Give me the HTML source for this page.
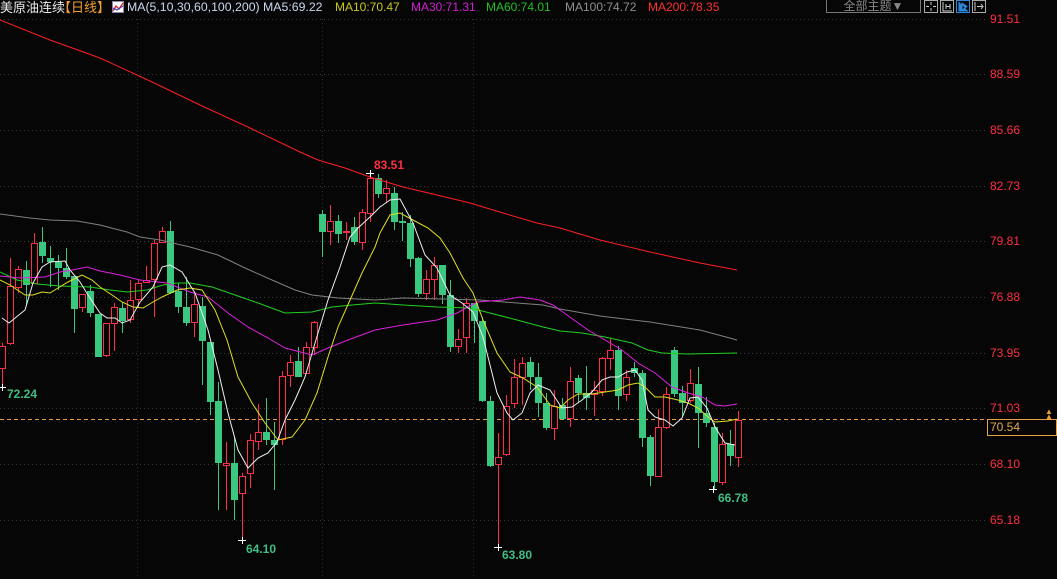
<!DOCTYPE html>
<html><head><meta charset="utf-8">
<style>
html,body{margin:0;padding:0;background:#060606;}
#w{position:relative;width:1057px;height:579px;overflow:hidden;background:#060606;font-family:"Liberation Sans","Noto Sans CJK SC",sans-serif;}
.t{position:absolute;top:0;font-size:12px;line-height:15px;white-space:nowrap;}
.ax{position:absolute;left:990px;font-size:12px;color:#ff3040;line-height:14px;}
.lb{position:absolute;font-size:12px;font-weight:bold;color:#3fbf84;line-height:14px;}
</style></head><body>
<div id="w">
<svg id="s" width="1057" height="579" style="position:absolute;left:0;top:0"></svg>
<div class="t" style="left:0;color:#e8e8e8;font-size:13px">美原油连续</div>
<div class="t" style="left:58px;color:#f0a030;font-size:13px">【日线】</div>
<svg style="position:absolute;left:112px;top:1px" width="12" height="12"><rect x="0.5" y="0.5" width="11" height="11" fill="#fff" stroke="#88a"/><polyline points="1,10 4,5 7,8 11,2" fill="none" stroke="#e02020" stroke-width="1.3"/><polyline points="1,7 5,9 11,5" fill="none" stroke="#2040d0" stroke-width="1"/></svg>
<div class="t" style="left:127px;color:#c8d8f0;font-size:12.3px">MA(5,10,30,60,100,200) MA5:69.22</div>
<div class="t" style="left:335px;color:#c8c820">MA10:70.47</div>
<div class="t" style="left:411px;color:#d020d0">MA30:71.31</div>
<div class="t" style="left:486px;color:#20c020">MA60:74.01</div>
<div class="t" style="left:565px;color:#909090">MA100:74.72</div>
<div class="t" style="left:648px;color:#ff3030">MA200:78.35</div>
<div style="position:absolute;left:826px;top:0;width:93px;height:12px;border:1px solid #777;border-top:none;color:#888;font-size:12px;line-height:12px;text-align:center">全部主题▼</div>
<svg style="position:absolute;left:924px;top:0" width="62" height="14">
<rect x="0.5" y="0.5" width="13" height="12" fill="none" stroke="#aaa"/><path d="M7 2v3M7 8v3M2 6.5h3M9 6.5h3" stroke="#ccc"/>
<rect x="16.5" y="0.5" width="13" height="12" fill="none" stroke="#aaa"/><path d="M19 2v9h9M22 4v5M26 4v5M22 6.5h4" stroke="#ccc" fill="none"/>
<rect x="32.5" y="0.5" width="13" height="12" fill="none" stroke="#2a8ae0"/><path d="M35 2v9h9M38 3l5 3.5-5 3.5z" stroke="#2a8ae0" fill="#2a8ae0"/>
<rect x="48.5" y="0.5" width="13" height="12" fill="none" stroke="#aaa"/><path d="M51 2v9M53 6.5h6M57 4l2 2.5-2 2.5" stroke="#ccc" fill="none"/>
</svg>
<div class="ax" style="top:12px">91.51</div>
<div class="ax" style="top:67px">88.59</div>
<div class="ax" style="top:123px">85.66</div>
<div class="ax" style="top:179px">82.73</div>
<div class="ax" style="top:234px">79.81</div>
<div class="ax" style="top:290px">76.88</div>
<div class="ax" style="top:346px">73.95</div>
<div class="ax" style="top:401px">71.03</div>
<div class="ax" style="top:457px">68.10</div>
<div class="ax" style="top:513px">65.18</div>
<div style="position:absolute;left:987px;top:419px;width:66px;height:15px;border:1px solid #e8a040;color:#e0a850;font-size:12px;line-height:15px;padding-left:2px;box-sizing:content-box">70.54</div>
<div style="position:absolute;left:1045px;top:409px;color:#f0a030;font-size:8px;line-height:5px">▲<br>▲</div>
<div class="lb" style="left:374px;top:158px;color:#ff3040">83.51</div>
<div class="lb" style="left:7px;top:387px">72.24</div>
<div class="lb" style="left:246px;top:542px">64.10</div>
<div class="lb" style="left:502px;top:548px">63.80</div>
<div class="lb" style="left:718px;top:491px">66.78</div>
</div>
<script>
var C=[[346,368,343,387,'r'],[286,343,258,345,'r'],[269,287,266,293,'r'],[270,285,261,305,'g'],[243,283,233,283,'r'],[242,256,227,263,'g'],[258,262,246,287,'g'],[262,268,255,290,'g'],[268,277,248,279,'g'],[276,309,276,333,'g'],[294,307,294,312,'r'],[291,313,285,317,'g'],[314,357,314,357,'g'],[323,355,323,357,'r'],[307,323,303,351,'r'],[308,321,302,333,'g'],[300,319,280,323,'r'],[283,299,280,308,'r'],[280,282,266,282,'r'],[243,279,240,317,'r'],[231,242,227,242,'r'],[231,293,221,294,'g'],[291,307,283,313,'g'],[307,323,277,326,'g'],
[304,322,293,337,'r'],[306,341,297,385,'g'],[342,402,342,415,'g'],[401,463,382,510,'g'],[463,465,442,510,'r'],[463,500,437,520,'g'],[476,493,473,542,'r'],[440,473,434,488,'r'],[432,441,404,450,'r'],[432,440,398,445,'g'],[440,445,422,490,'g'],[376,439,371,445,'r'],[362,375,355,387,'r'],[361,377,347,377,'g'],[347,373,342,373,'r'],[322,347,321,355,'r'],[214,232,210,257,'g'],[221,231,205,245,'r'],[221,234,215,243,'g'],[231,232,222,240,'r'],[227,242,217,245,'g'],[212,242,209,250,'r'],[178,213,173,222,'r'],
[178,194,174,198,'g'],[188,193,180,203,'r'],[193,222,187,230,'g'],[221,223,212,241,'g'],[223,259,215,267,'g'],[258,294,257,297,'g'],[279,293,270,300,'r'],[265,279,257,300,'r'],[265,295,265,304,'g'],[295,347,280,352,'g'],[339,346,329,353,'r'],[303,337,298,353,'r'],[303,321,303,343,'g'],[321,401,317,402,'g'],[401,466,396,467,'g'],[457,464,433,547,'r'],[406,454,395,456,'r'],[377,403,359,408,'r'],[363,377,357,405,'r'],[362,377,357,390,'g'],[377,403,363,417,'g'],[403,428,393,430,'g'],[406,428,390,440,'r'],
[405,419,398,420,'g'],[381,418,367,427,'r'],[378,393,375,402,'g'],[393,398,366,410,'g'],[390,394,381,416,'r'],[358,391,357,396,'r'],[350,358,339,370,'r'],[350,396,346,410,'g'],[377,394,370,401,'r'],[368,373,362,377,'g'],[373,438,370,447,'g'],[437,476,435,486,'g'],[427,476,409,477,'r'],[394,427,387,429,'r'],[350,394,347,397,'g'],[393,403,386,417,'g'],[383,400,369,403,'r'],[384,413,367,448,'g'],[413,423,397,427,'g'],[427,482,423,490,'g'],[444,482,433,485,'r'],[444,456,430,466,'g'],[420,457,411,467,'r']];
var h='';
[19,74,130,186,241,297,353,408,464,520].forEach(function(y){h+='<line x1="0" x2="985" y1="'+(y+.5)+'" y2="'+(y+.5)+'" stroke="#3a3a3a" stroke-dasharray="1,3"/>';});
[137,322,473].forEach(function(x){h+='<line x1="'+(x+.5)+'" x2="'+(x+.5)+'" y1="19" y2="579" stroke="#303030" stroke-dasharray="1,3"/>';});
h+='<line x1="0" x2="985" y1="419.5" y2="419.5" stroke="#e8a040" stroke-dasharray="4,3"/>';
C.forEach(function(c,i){var x=Math.round(1.5+8*i);var t=Math.min(c[0],c[1]),b=Math.max(c[0],c[1]);if(b-t<1)b=t+1;
if(c[4]=='r'){h+='<line x1="'+(x+.5)+'" x2="'+(x+.5)+'" y1="'+c[2]+'" y2="'+t+'" stroke="#ff3048"/><line x1="'+(x+.5)+'" x2="'+(x+.5)+'" y1="'+b+'" y2="'+c[3]+'" stroke="#ff3048"/><rect x="'+(x-2.5)+'" y="'+(t+.5)+'" width="6" height="'+(b-t)+'" fill="#060606" stroke="#ff3048"/>';}
else{h+='<line x1="'+(x+.5)+'" x2="'+(x+.5)+'" y1="'+c[2]+'" y2="'+c[3]+'" stroke="#3ac880"/><rect x="'+(x-3)+'" y="'+t+'" width="7" height="'+(b-t)+'" fill="#3ac880"/>';}});
function P(pts,col){h+='<polyline points="'+pts+'" fill="none" stroke="'+col+'" stroke-width="1"/>';}
P('0,20 50,40 100,58 150,81 200,105 250,128 300,152 318,160 345,168 370,177 403,187 437,195 470,203 503,213 537,223 560,228 600,240 650,252 700,263 737,270','#ff2020');
P('0,214 30,218 50,220 77,221 100,225 127,232 140,237 160,240 190,247 218,255 245,268 272,280 295,290 312,295 338,298 375,300 403,298 443,299 480,300 517,303 543,305 560,309 600,316 650,322 700,330 737,340','#808080');
P('0,272 17,280 37,284 60,286 90,287 110,290 127,292 147,290 163,285 177,283 190,283 212,287 235,295 258,303 285,313 312,312 332,307 352,305 375,303 403,305 437,307 470,308 490,313 517,320 543,327 560,331 582,333 605,337 632,343 648,350 662,353 688,354 737,353','#20d020');
P('0,276 20,278 45,277 60,272 72,270 87,267 100,271 120,275 140,280 167,283 190,292 208,297 228,313 248,327 268,338 285,348 312,355 328,348 348,340 375,330 403,325 437,320 457,313 477,302 503,300 520,297 540,300 553,305 560,310 588,330 605,340 622,350 638,363 655,373 672,387 688,393 702,397 715,405 725,406 737,404','#e020e0');
P('0,280 10,285 25,295 33,295 42,292 50,293 58,288 68,282 82,275 92,280 100,287 112,295 122,302 133,307 143,308 153,302 162,297 177,290 190,288 202,290 215,310 227,340 238,377 252,403 265,423 278,440 292,437 305,420 317,393 328,357 338,327 350,300 362,273 375,247 380,233 390,215 400,213 413,220 428,228 440,238 450,253 463,278 473,293 483,320 497,353 510,372 523,378 537,387 550,405 560,408 568,400 578,394 592,394 605,392 618,390 628,385 638,383 645,387 655,397 665,397 678,400 688,403 698,408 708,417 715,422 728,421 737,419','#e0e020');
P('2,318 9,323 25,310 33,283 42,267 50,262 65,261 70,270 80,282 88,295 100,313 107,318 115,318 122,323 130,320 140,302 153,287 162,267 170,265 182,272 190,285 195,293 208,330 218,370 228,413 238,450 248,468 258,458 268,453 277,442 285,420 295,400 305,377 318,333 328,300 340,267 350,237 358,228 370,217 380,207 390,200 400,199 413,223 425,255 437,268 450,295 462,303 473,312 483,337 497,393 507,413 513,420 522,413 530,393 538,385 550,390 562,408 572,407 582,400 592,392 602,380 610,377 618,377 627,372 635,370 642,380 648,410 655,417 665,420 673,426 682,418 690,398 698,397 707,408 715,427 725,443 735,445','#f0f0f0');
function M(x,y){h+='<path d="M'+(x-4)+' '+(y+.5)+'h8M'+(x+.5)+' '+(y-3)+'v7" stroke="#fff"/>';}
M(370,173);M(2,387);M(242,540);M(498,547);M(713,489);
document.getElementById('s').innerHTML=h;
</script>
</body></html>
